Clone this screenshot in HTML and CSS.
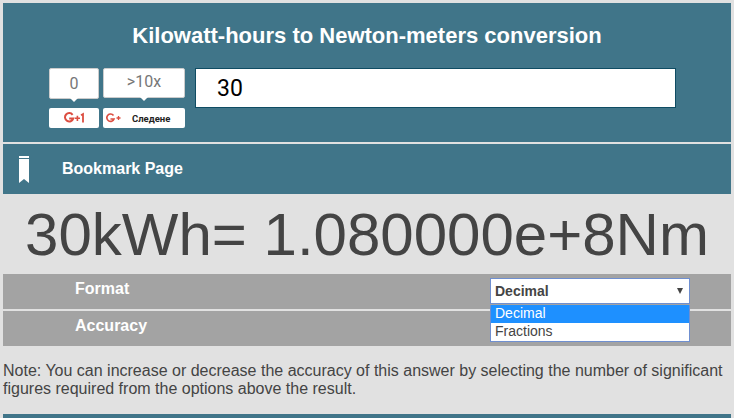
FILE: index.html
```html
<!DOCTYPE html>
<html lang="en">
<head>
    <meta charset="UTF-8">
    <title>Kilowatt-hours to Newton-meters conversion</title>
    <link rel="stylesheet" href="styles.css">
</head>
<body>
    <div class="cabecalho">
        <h1 class="titulo">Kilowatt-hours to Newton-meters conversion</h1>
        <div class="linha-busca">
            <div class="social">
                <div class="social-col col-um">
                    <div class="contador">0</div>
                    <div class="botao-g">
                        <svg width="21" height="12" viewBox="0 0 21 12">
                            <path d="M8.6 2.8A4.2 4.2 0 1 0 9.2 6.6H5.2" fill="none" stroke="#dc4e41" stroke-width="2"/>
                            <path d="M10.8 6.3H16M13.4 3.7V8.9" fill="none" stroke="#dc4e41" stroke-width="1.6"/>
                            <path d="M17 3.2L19 2V10.5" fill="none" stroke="#dc4e41" stroke-width="1.8"/>
                        </svg>
                    </div>
                </div>
                <div class="social-col col-dois">
                    <div class="contador contador-grande">&gt;10x</div>
                    <div class="botao-g botao-seguir">
                        <svg class="g-mais" width="15" height="10" viewBox="0 0 15 10">
                            <path d="M7.5 2.5A3.7 3.7 0 1 0 8 6H4.5" fill="none" stroke="#dc4e41" stroke-width="1.7"/>
                            <path d="M10.5 5H14.5M12.5 3V7" fill="none" stroke="#dc4e41" stroke-width="1.3"/>
                        </svg>
                        <span class="seguir">Следене</span>
                    </div>
                </div>
            </div>
            <input class="valor" type="text" value="30">
        </div>
    </div>

    <div class="favorito">
        <svg class="marcador" width="10" height="27" viewBox="0 0 10 27">
            <rect x="0" y="0" width="10" height="2" fill="#fff"/>
            <path d="M0 3H10V27L5 23L0 27Z" fill="#fff"/>
        </svg>
        <span>Bookmark Page</span>
    </div>

    <div class="resultado">30kWh= 1.080000e+8Nm</div>

    <div class="opcao opcao-formato">
        <span class="opcao-nome">Format</span>
        <div class="seletor">
            <div class="seletor-caixa">Decimal<span class="seta"></span></div>
            <ul class="seletor-lista">
                <li class="ativo">Decimal</li>
                <li>Fractions</li>
            </ul>
        </div>
    </div>
    <div class="opcao">
        <span class="opcao-nome">Accuracy</span>
    </div>

    <p class="nota">Note: You can increase or decrease the accuracy of this answer by selecting the number of significant figures required from the options above the result.</p>

    <div class="rodape"></div>
</body>
</html>
```

FILE: styles.css
```css
html, body {
    height: 418px;
    overflow: hidden;
}
body {
    margin: 0;
    padding: 3px 3px 0 3px;
    box-sizing: border-box;
    background-color: #e1e1e1;
    font-family: "Liberation Sans", Arial, sans-serif;
}
.cabecalho {
    height: 139px;
    background-color: #407589;
    box-sizing: border-box;
    padding-top: 20px;
}
.titulo {
    margin: 0;
    color: #fff;
    font-size: 22px;
    line-height: 25px;
    font-weight: bold;
    text-align: center;
}
.linha-busca {
    display: flex;
    margin: 20px 0 0 46px;
}
.social {
    display: flex;
    gap: 4px;
    font-family: Roboto, sans-serif;
}
.col-um {
    width: 50px;
}
.col-dois {
    width: 82px;
}
.contador {
    position: relative;
    height: 31px;
    background-color: #fff;
    border: 1px solid #ccc;
    box-sizing: border-box;
    border-radius: 2px;
    color: #777;
    font-size: 16px;
    line-height: 30px;
    text-align: center;
}
.contador-grande {
    height: 30px;
    line-height: 25px;
}
.contador::after {
    content: "";
    position: absolute;
    left: 50%;
    bottom: -4px;
    margin-left: -4px;
    border-left: 4px solid transparent;
    border-right: 4px solid transparent;
    border-top: 4px solid #fff;
}
.botao-g {
    display: flex;
    align-items: center;
    justify-content: center;
    height: 20px;
    margin-top: 9px;
    background-color: #fff;
    border-radius: 2px;
}
.botao-seguir {
    justify-content: flex-start;
    margin-top: 10px;
    padding-left: 3px;
}
.g-mais {
    margin-right: 11px;
}
.seguir {
    color: #222;
    font-size: 9.5px;
    font-weight: bold;
}
.valor {
    width: 481px;
    height: 40px;
    margin: 0 0 0 10px;
    padding: 0 0 0 21px;
    box-sizing: border-box;
    border: 1px solid #0f4c63;
    background-color: #fff;
    color: #000;
    font-family: Roboto, sans-serif;
    font-size: 23px;
}
.favorito {
    display: flex;
    align-items: center;
    height: 50px;
    margin-top: 2px;
    background-color: #407589;
    color: #fff;
    font-size: 16px;
    font-weight: bold;
}
.marcador {
    margin-left: 16px;
    margin-right: 33px;
}
.resultado {
    height: 80px;
    color: #444;
    font-size: 60px;
    line-height: 82px;
    text-align: center;
}
.opcao {
    position: relative;
    height: 35px;
    margin-bottom: 2px;
    background-color: #a3a3a3;
    color: #fff;
    font-size: 16px;
    font-weight: bold;
}
.opcao-nome {
    display: block;
    padding: 6px 0 0 72px;
    line-height: 18px;
}
.seletor {
    position: absolute;
    left: 487px;
    top: 4px;
    width: 200px;
    z-index: 2;
    color: #444;
    font-size: 14px;
}
.seletor-caixa {
    position: relative;
    height: 26px;
    box-sizing: border-box;
    padding-left: 4px;
    border: 1px solid #6f8fd0;
    background-color: #fff;
    line-height: 24px;
}
.seta {
    position: absolute;
    right: 6px;
    top: 9px;
    border-left: 3px solid transparent;
    border-right: 3px solid transparent;
    border-top: 6px solid #444;
}
.seletor-lista {
    margin: 1px 0 0;
    padding: 0;
    list-style: none;
    border: 1px solid #6f8fd0;
    border-top: 0;
    background-color: #fff;
    font-weight: normal;
}
.seletor-lista li {
    height: 18px;
    padding-left: 4px;
    line-height: 17px;
}
.seletor-lista .ativo {
    background-color: #1e90ff;
    color: #fff;
}
.nota {
    margin: 16px 0 0;
    color: #444;
    font-size: 16px;
    line-height: 18px;
}
.rodape {
    height: 10px;
    margin-top: 16px;
    background-color: #407589;
}
```
